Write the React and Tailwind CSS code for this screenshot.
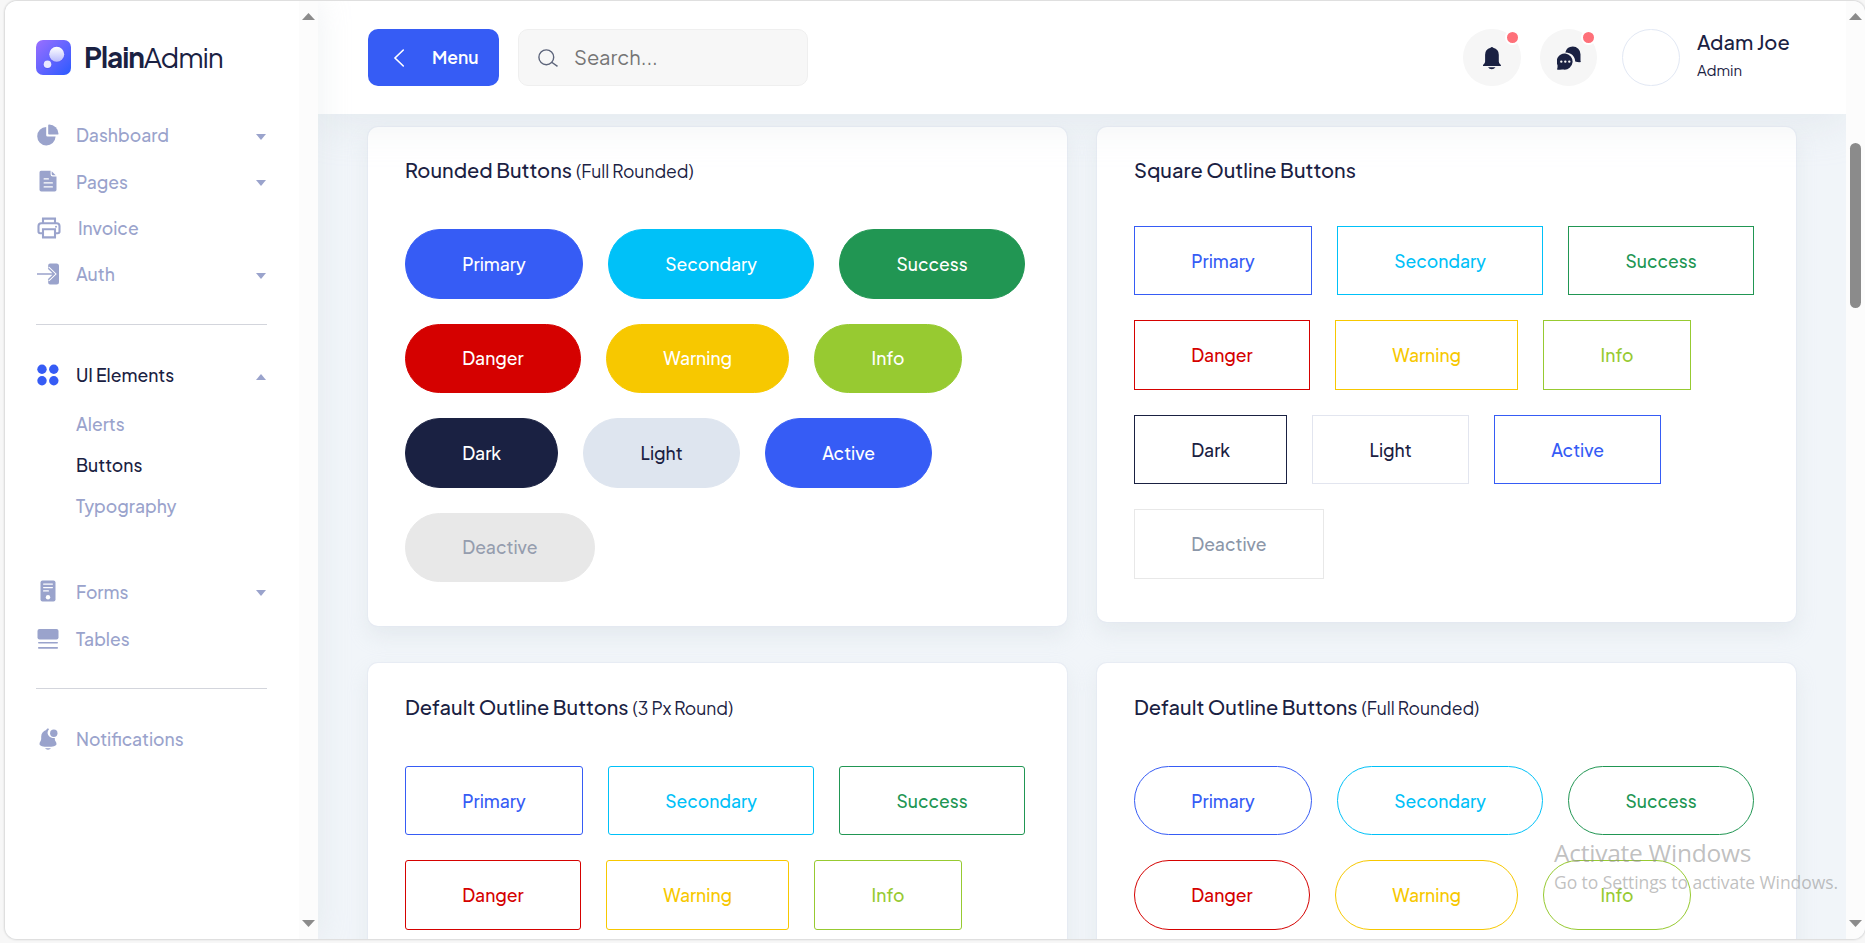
import React from "react";

const BUTTONS = [
  { label: "Primary", solid: "border-[#365cf5] bg-[#365cf5] text-white", outline: "border-[#365cf5] text-[#365cf5]" },
  { label: "Secondary", solid: "border-[#00c1f8] bg-[#00c1f8] text-white", outline: "border-[#00c1f8] text-[#00c1f8]" },
  { label: "Success", solid: "border-[#219653] bg-[#219653] text-white", outline: "border-[#219653] text-[#219653]" },
  { label: "Danger", solid: "border-[#d50100] bg-[#d50100] text-white", outline: "border-[#d50100] text-[#d50100]" },
  { label: "Warning", solid: "border-[#f7c800] bg-[#f7c800] text-white", outline: "border-[#f7c800] text-[#f7c800]" },
  { label: "Info", solid: "border-[#97ca31] bg-[#97ca31] text-white", outline: "border-[#97ca31] text-[#97ca31]" },
  { label: "Dark", solid: "border-[#1a2142] bg-[#1a2142] text-white", outline: "border-[#1a2142] text-[#1a2142]" },
  { label: "Light", solid: "border-[#dee5ef] bg-[#dee5ef] text-[#1a2142]", outline: "border-[#e2e5ef] text-[#1a2142]" },
  { label: "Active", solid: "border-[#365cf5] bg-[#365cf5] text-white", outline: "border-[#365cf5] text-[#365cf5]" },
  { label: "Deactive", solid: "border-[#e8e8e8] bg-[#e8e8e8] text-[#959dae]", outline: "border-[#e8e8e8] text-[#8c97a9]" },
];

function ButtonCard({ title, note, radius, outline }) {
  return (
    <section className={`rounded-[10px] bg-white pl-[37px] shadow-[0_0_0_1px_rgba(226,232,242,0.6),0_10px_20px_rgba(200,208,216,0.3)] ${note ? "pb-[43.7px]" : "pb-[42.9px]"}`}>
      <h6 className={`flex items-baseline gap-[4px] text-[#1a2142] ${note ? "h-[102.6px]" : "h-[99.3px]"} ${note && outline ? "pt-[28.2px]" : "pt-[27.5px]"}`}>
        <span className="text-[20px] leading-[32px] font-medium">{title}</span>
        {note && <span className="text-[17.5px]">{note}</span>}
      </h6>
      <div className="flex w-[626px] flex-wrap gap-[25px]">
        {BUTTONS.map((b) => (
          <button
            key={b.label}
            className={`h-[69.5px] border px-[56.25px] text-[17.5px] font-medium ${note && outline ? "pt-[1px]" : ""} ${radius} ${outline ? b.outline : b.solid}`}
          >
            {b.label}
          </button>
        ))}
      </div>
    </section>
  );
}

const Icon = ({ children, className = "size-[22px]", box = "0 0 22 22" }) => (
  <svg viewBox={box} className={`mb-[2px] shrink-0 ${className}`} fill="currentColor">
    {children}
  </svg>
);

const PieIcon = () => (
  <Icon>
    <path d="M9.200 3A9.200 9.200 0 1 0 18.600 12.600H10.600A1.400 1.400 0 0 1 9.200 11.200Z" />
    <path d="M11.200 1.400c0-.6.400-1 1-1A9.600 9.600 0 0 1 21.500 9.700c0 .5-.4.900-.9.900H12a.8.8 0 0 1-.8-.8Z" />
  </Icon>
);
const FileIcon = () => (
  <Icon>
    <path fillRule="evenodd" d="M4 .7h9.600v3.800a2 2 0 0 0 2 2h3.900v13.200a1.800 1.800 0 0 1-1.800 1.800H4.300a1.800 1.800 0 0 1-1.800-1.800V2.500A1.800 1.800 0 0 1 4 .7ZM7 8.300a.7.7 0 0 0 0 1.300h4.500a.7.7 0 0 0 0-1.300Zm0 4a.7.7 0 0 0 0 1.300h8.500a.7.7 0 0 0 0-1.300Zm0 4a.7.7 0 0 0 0 1.300h8.500a.7.7 0 0 0 0-1.300Z" />
    <path d="M14.700 1.300 18.700 5.300H16a1.300 1.300 0 0 1-1.300-1.300Z" />
  </Icon>
);
const PrinterIcon = () => (
  <Icon className="h-[22px] w-[24px]" box="0 0 24 22">
    <g fill="none" stroke="currentColor" strokeWidth="2.1">
      <path d="M6 6.200V1.600h12v4.600M6 16.200H3.200A1.700 1.700 0 0 1 1.500 14.500V9a2.800 2.800 0 0 1 2.800-2.800h15.400A2.800 2.800 0 0 1 22.500 9v5.500a1.700 1.700 0 0 1-1.700 1.700H18" />
      <path d="M6 12.200h12v8.200H6Z" />
    </g>
    <circle cx="19" cy="9.700" r="1" />
  </Icon>
);
const AuthIcon = () => (
  <Icon>
    <path d="M13 .5h6.500A2.500 2.500 0 0 1 22 3v16a2.500 2.500 0 0 1-2.500 2.500H13a1.800 1.800 0 0 1-1.800-1.800v-3.200L16.800 11 11.200 5.500V2.300A1.800 1.800 0 0 1 13 .5Z" />
    <path d="M11.200 4.800 17.600 11l-6.400 6.200" fill="none" stroke="#fff" strokeWidth="3" />
    <path d="M0 11h17M11.300 5.200 17.300 11l-6 5.800" fill="none" stroke="currentColor" strokeWidth="1.500" />
  </Icon>
);
const DotsIcon = () => (
  <Icon className="size-[22px] text-[#365cf5]">
    <circle cx="5" cy="5.200" r="4.700" />
    <circle cx="16.800" cy="5.200" r="4.700" />
    <circle cx="5" cy="16.800" r="4.700" />
    <circle cx="16.800" cy="16.800" r="4.700" />
  </Icon>
);
const FormIcon = () => (
  <Icon>
    <rect x="3.500" y="0.500" width="15" height="21" rx="2" />
    <g fill="#fff">
      <rect x="6" y="3.400" width="10" height="1.300" rx=".6" />
      <rect x="6" y="6.900" width="10" height="1.300" rx=".6" />
      <rect x="6" y="10.300" width="6" height="1.300" rx=".6" />
      <circle cx="11" cy="17.200" r="2.200" />
    </g>
  </Icon>
);
const TableIcon = () => (
  <Icon>
    <rect x="0.500" y="1" width="21" height="10.500" rx="2" />
    <rect x="1" y="14" width="20" height="1.600" rx=".8" />
    <rect x="1" y="19" width="20" height="1.700" rx=".8" />
  </Icon>
);
const NotifyIcon = () => (
  <Icon>
    <path d="M11 .4a1 1 0 0 1 1 .9A5.200 5.200 0 0 0 16.800 9.900c.4 0 .7 0 1 0v1.300c0 1.700 1.700 2.700 1.700 4.700 0 2-3.800 2.800-8.500 2.800s-8.500-.8-8.500-2.800c0-2 1.700-3.300 1.700-5V8.500c0-3.200 2-5.700 5-6.600.2-.9.900-1.500 1.800-1.500Z" />
    <circle cx="16.800" cy="5.200" r="4.500" fill="#fff" />
    <circle cx="16.800" cy="5.200" r="3.700" />
    <path d="M8 20.100a17 17 0 0 0 6 0 3.500 3.500 0 0 1-6 0Z" />
  </Icon>
);

const Caret = ({ up }) => (
  <svg viewBox="0 0 10 6" className={`mt-[2px] mr-[1px] ml-auto h-[6px] w-[10px] ${up ? "rotate-180" : ""}`} fill="currentColor">
    <path d="M0 0h10L5 6Z" />
  </svg>
);

function NavItem({ icon, label, caret, active, height }) {
  return (
    <a className={`flex items-center gap-[17px] pl-[1px] text-[#9aa3cc] ${height}`}>
      {icon}
      <span className={`text-[17.5px] font-medium ${active ? "text-[#1a2142]" : ""}`}>{label}</span>
      {caret && <Caret up={caret === "up"} />}
    </a>
  );
}

function ScrollRail({ children }) {
  return (
    <div className="flex w-[19px] shrink-0 flex-col items-center justify-between bg-[#fcfcfc] pt-[12px] pb-[12px]">
      <svg viewBox="0 0 13 7" className="h-[7px] w-[13px]" fill="#8b8b8b"><path d="M0 7 6.500 0 13 7Z" /></svg>
      {children}
      <svg viewBox="0 0 13 7" className="h-[7px] w-[13px]" fill="#8b8b8b"><path d="M0 0h13L6.500 7Z" /></svg>
    </div>
  );
}

function Sidebar() {
  return (
    <aside className="relative z-20 flex w-[313px] shrink-0 bg-white shadow-[0_0_30px_rgba(200,208,216,0.3)]">
      <div className="w-[294px] pr-[32px] pl-[31px]">
        <div className="flex h-[112px] items-center gap-[13px]">
          <svg viewBox="0 0 35 35" className="size-[35px]">
            <defs>
              <linearGradient id="tile" x1="0" y1="0" x2="1" y2="1">
                <stop offset="0" stopColor="#9b6fff" />
                <stop offset="1" stopColor="#2b5aff" />
              </linearGradient>
              <linearGradient id="ball" x1="0" y1="0" x2="0" y2="1">
                <stop offset="0" stopColor="#fff" />
                <stop offset="1" stopColor="#b9bcfd" />
              </linearGradient>
            </defs>
            <rect width="35" height="35" rx="7" fill="url(#tile)" />
            <circle cx="20.800" cy="14.500" r="8" fill="#5a52e8" opacity=".35" />
            <circle cx="20.700" cy="14.300" r="7.500" fill="url(#ball)" />
            <circle cx="11.500" cy="24.700" r="4.200" fill="#4a49dd" opacity=".4" />
            <circle cx="11.500" cy="24.200" r="3.800" fill="#e9e9ff" />
          </svg>
          <div className="text-[28px] leading-[36px] tracking-[-1.050px] text-[#1a2142]">
            <span className="font-bold">Plain</span>
            <span>Admin</span>
          </div>
        </div>
        <nav>
          <div className="h-[211px]">
            <NavItem icon={<PieIcon />} label="Dashboard" caret="down" height="h-[45px]" />
            <NavItem icon={<FileIcon />} label="Pages" caret="down" height="h-[48px]" />
            <NavItem icon={<PrinterIcon />} label="Invoice" height="h-[45px]" />
            <NavItem icon={<AuthIcon />} label="Auth" caret="down" height="h-[47px]" />
          </div>
          <hr className="border-t border-[#d3d5dc]" />
          <div className="h-[363px] pt-[27.5px]">
            <NavItem icon={<DotsIcon />} label="UI Elements" caret="up" active height="h-[46px]" />
            <ul className="mt-[5px] mb-[42px] pl-[40px] text-[17.5px] leading-[41px] font-medium text-[#9aa3cc]">
              <li>Alerts</li>
              <li className="text-[#1a2142]">Buttons</li>
              <li>Typography</li>
            </ul>
            <NavItem icon={<FormIcon />} label="Forms" caret="down" height="h-[47px]" />
            <NavItem icon={<TableIcon />} label="Tables" height="h-[48px]" />
          </div>
          <hr className="border-t border-[#d3d5dc]" />
          <div className="pt-[27px]">
            <NavItem icon={<NotifyIcon />} label="Notifications" height="h-[47px]" />
          </div>
        </nav>
      </div>
      <ScrollRail />
    </aside>
  );
}

function RoundButton({ children, className }) {
  return (
    <button className={`relative flex h-[57px] items-center justify-center rounded-full bg-[#f6f6f6] text-[#1a2142] ${className}`}>
      {children}
      <span className="absolute top-[1px] right-[1px] size-[15px] rounded-full border-2 border-white bg-[#fe7079]" />
    </button>
  );
}

function Header() {
  return (
    <header className="relative z-10 flex h-[113px] shrink-0 items-center bg-white pl-[50px] shadow-[0_10px_40px_rgba(200,208,216,0.3)]">
      <button className="flex h-[57px] w-[131px] items-center rounded-[10px] bg-[#365cf5] pl-[25px] text-white">
        <svg viewBox="0 0 12 18" className="h-[18px] w-[12px]" fill="none" stroke="currentColor" strokeWidth="1.600" strokeLinecap="round">
          <path d="M10.300 1 2 9l8.300 8" />
        </svg>
        <span className="ml-[27px] text-[17.5px] font-semibold">Menu</span>
      </button>
      <div className="ml-[19px] flex h-[57px] w-[290px] items-center rounded-[10px] border border-[#efefef] bg-[#f7f7f7] pl-[19px]">
        <svg viewBox="0 0 20 18" className="h-[18px] w-[20px]" fill="none" stroke="#5d657b" strokeWidth="1.400">
          <circle cx="8.300" cy="8.300" r="7.400" />
          <path d="m13.700 13.200 5.800 4.200" />
        </svg>
        <span className="mb-[2px] ml-[16px] text-[20px] text-[#757575]">Search...</span>
      </div>
      <div className="ml-auto flex items-center pr-[56px]">
        <RoundButton className="w-[58px]">
          <svg viewBox="0 0 20 24" className="h-[24px] w-[20px]" fill="currentColor">
            <path d="M8.600 1.800a1.400 1.400 0 0 1 2.600 0A7.200 7.200 0 0 1 16.800 8.800V15.500c0 1.600 1.200 2.600 2.100 3.600v.9H1v-.9c.9-1 2.100-2 2.100-3.600V8.800A7.200 7.200 0 0 1 8.600 1.800Z" />
            <path d="M6 21.300h7.500a4.500 4.500 0 0 1-7.500 0Z" />
          </svg>
        </RoundButton>
        <RoundButton className="ml-[19px] w-[57px]">
          <svg viewBox="0 0 24 24" className="size-[24px]" fill="currentColor">
            <path d="M15.800.5a7.700 7.700 0 0 1 7.700 7.700v6.300c0 .6.200 1.100.4 1.600a16 16 0 0 1-5.700-.5c0-5.200-4.200-9.100-9.900-9A7.700 7.700 0 0 1 15.800.5Z" />
            <path fillRule="evenodd" d="M8.300 7.600a8 8 0 1 1-1.500 16c-2.100-.6-4.100.2-6.100.2-.5 0-.7-.3-.6-.7.500-1.300.5-2.700.4-4A8 8 0 0 1 8.300 7.600ZM4.300 14.400a1.200 1.200 0 1 0 0 2.400 1.200 1.200 0 0 0 0-2.400Zm4 0a1.200 1.200 0 1 0 0 2.400 1.200 1.200 0 0 0 0-2.400Zm4 0a1.200 1.200 0 1 0 0 2.400 1.200 1.200 0 0 0 0-2.400Z" />
          </svg>
        </RoundButton>
        <div className="ml-[25px] h-[57px] w-[58px] rounded-full border border-[#e2e8f4]" />
        <div className="ml-[17px] flex w-[93px] flex-col pb-[6px] text-[#1a2142]">
          <span className="text-[20px] leading-[30px] font-medium whitespace-nowrap">Adam Joe</span>
          <span className="text-[15px] leading-[26px]">Admin</span>
        </div>
      </div>
    </header>
  );
}

export default function App() {
  return (
    <div className="relative h-[943px] w-[1865px] overflow-hidden bg-[#f7f7f7] pt-[1px] pl-[5px] font-['Plus_Jakarta_Sans',Inter,sans-serif]">
      <div className="flex h-[938px] overflow-hidden rounded-[12px] bg-[#f1f5f9] shadow-[0_0_2px_1px_rgba(0,0,0,0.13)]">
        <Sidebar />
        <main className="flex w-[1528px] flex-col overflow-hidden">
          <Header />
          <div className="grid grid-cols-[699px_699px] items-start gap-x-[30px] gap-y-[37px] px-[50px] pt-[12.7px]">
            <ButtonCard title="Rounded Buttons" note="(Full Rounded)" radius="rounded-[35px]" />
            <ButtonCard title="Square Outline Buttons" radius="rounded-none" outline />
            <ButtonCard title="Default Outline Buttons" note="(3 Px Round)" radius="rounded-[3px]" outline />
            <ButtonCard title="Default Outline Buttons" note="(Full Rounded)" radius="rounded-[35px]" outline />
          </div>
        </main>
        <ScrollRail>
          <div className="mt-[123px] mb-auto h-[165px] w-[11px] rounded-full bg-[#8b8b8b]" />
        </ScrollRail>
      </div>
      <div className="absolute top-[836px] left-[1554px] z-30 font-['Segoe_UI','Open_Sans',sans-serif] whitespace-nowrap text-[#8b8b8b]/55">
        <p className="text-[24.500px] leading-[34px] tracking-[-0.25px]">Activate Windows</p>
        <p className="text-[17.500px] leading-[25px] tracking-[-0.08px]">Go to Settings to activate Windows.</p>
      </div>
    </div>
  );
}
